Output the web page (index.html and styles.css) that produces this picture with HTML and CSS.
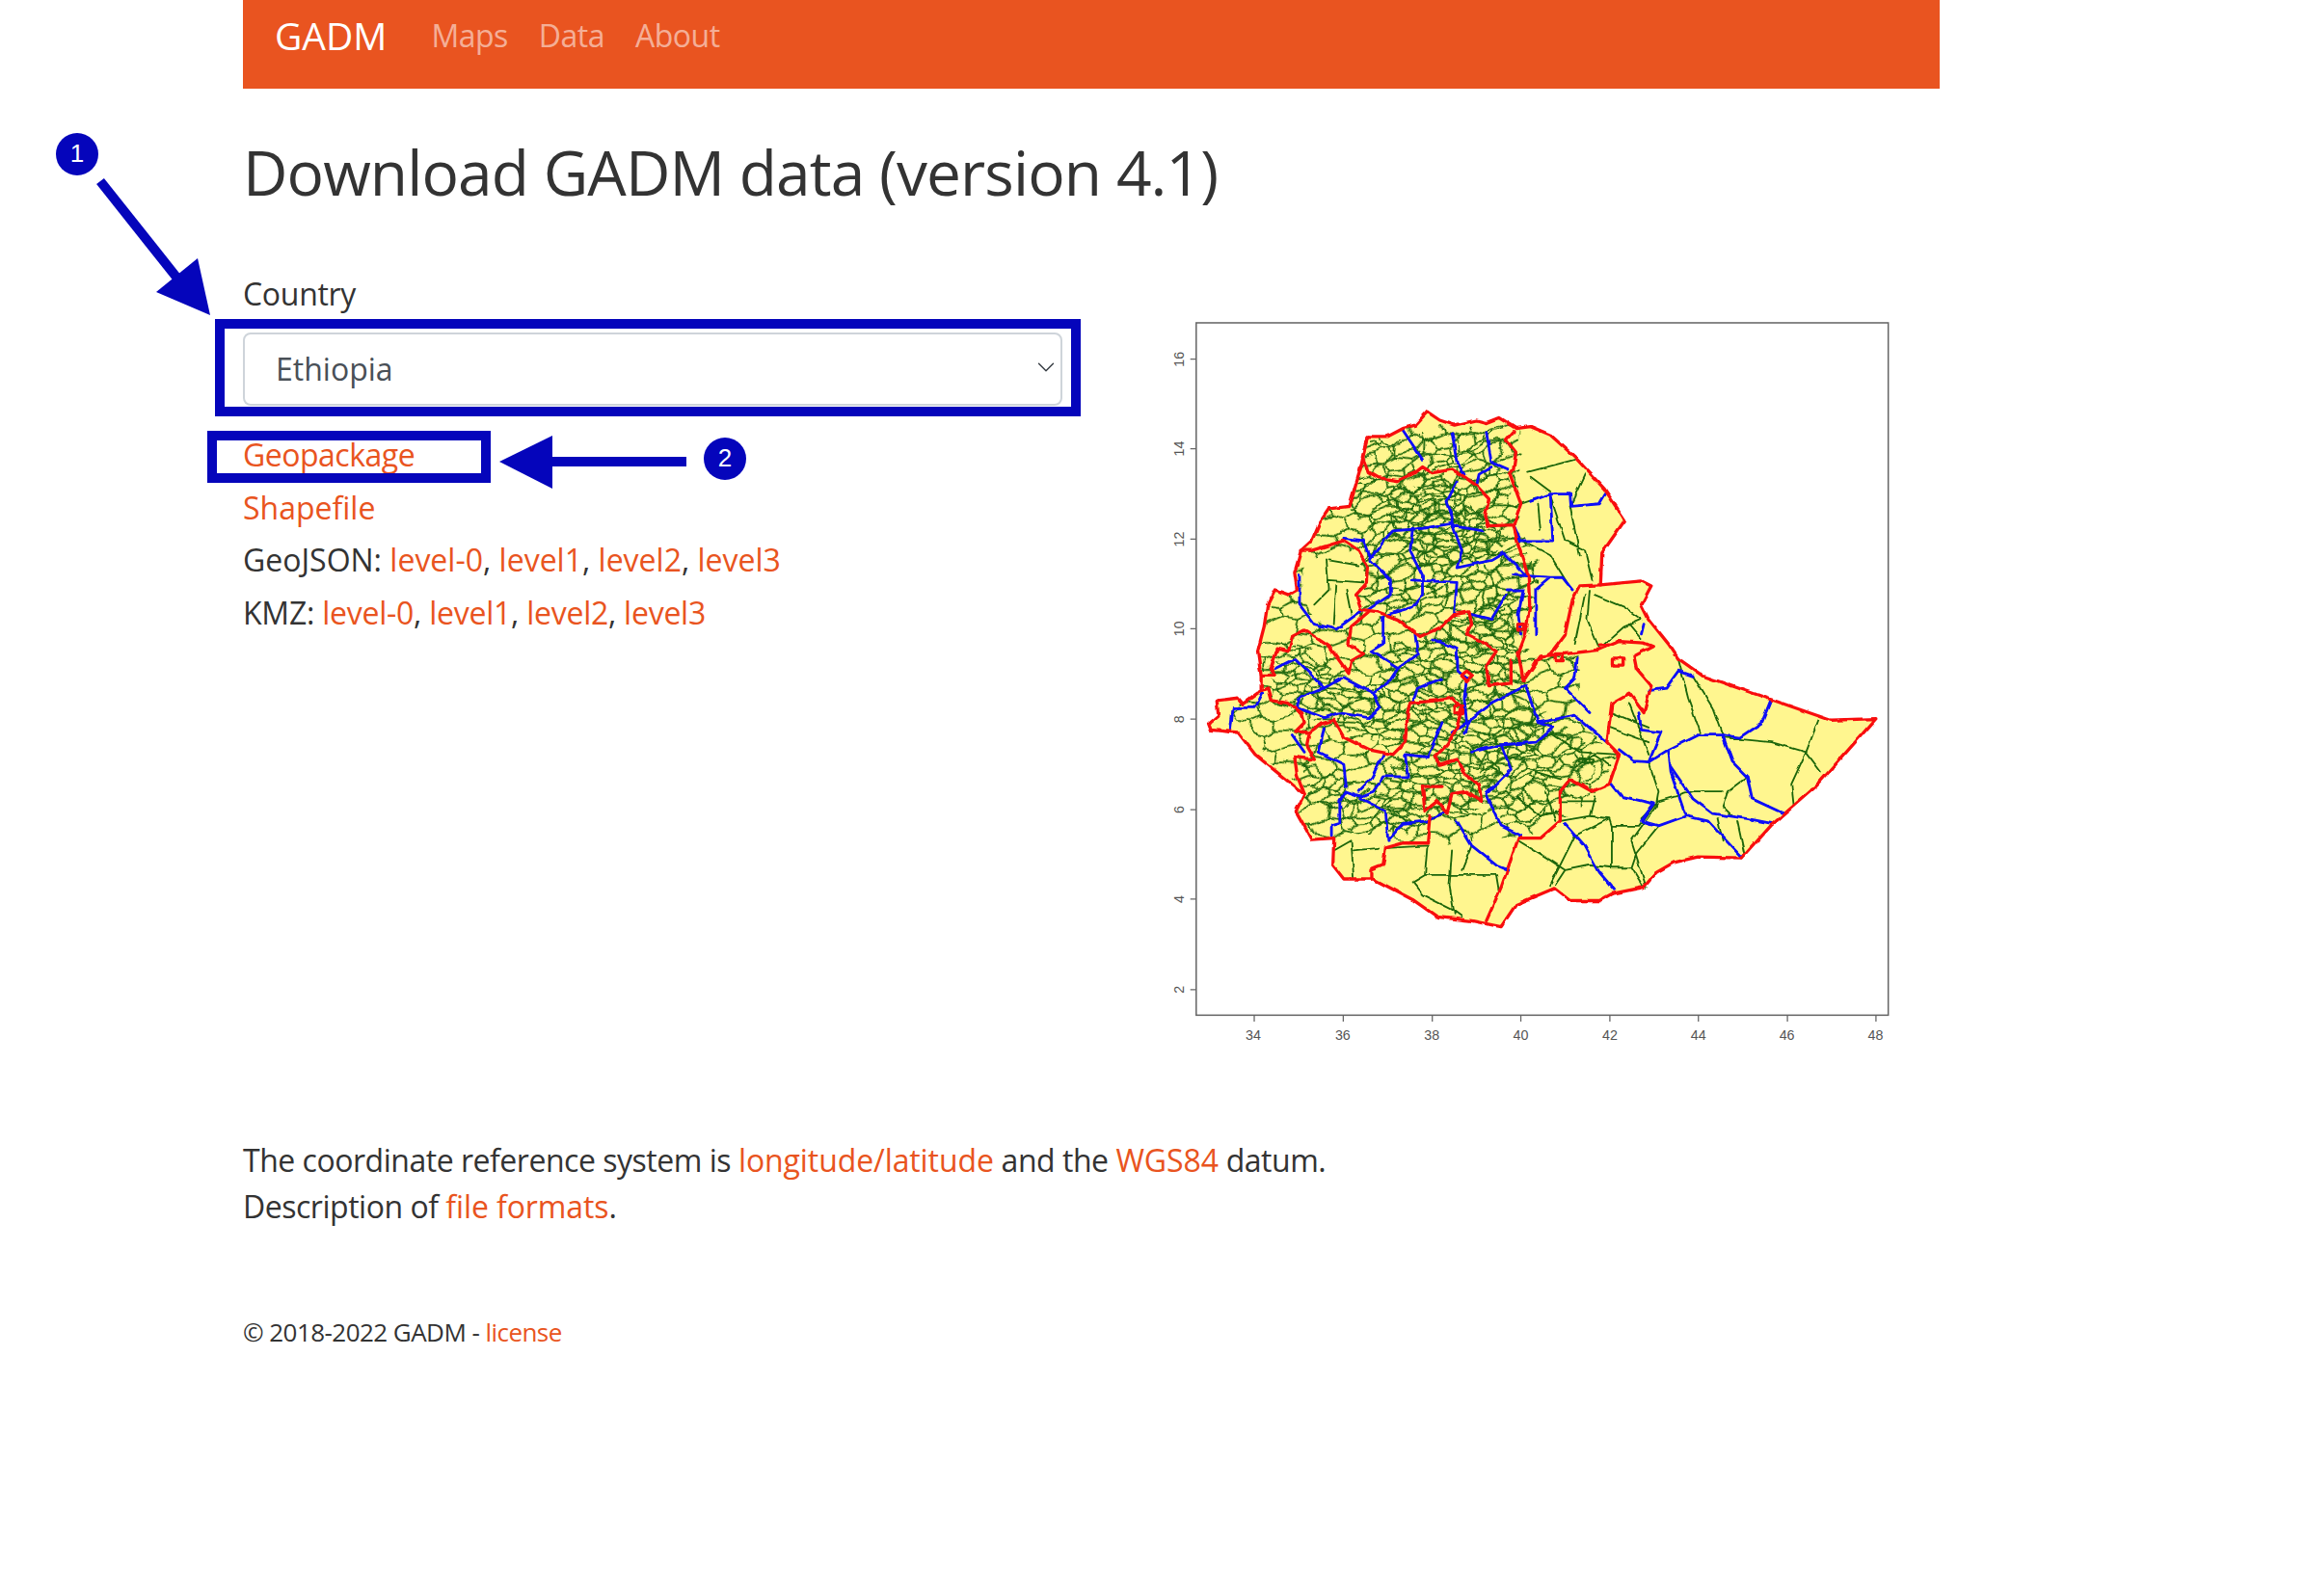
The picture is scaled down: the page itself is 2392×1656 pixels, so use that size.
FILE: index.html
```html
<!DOCTYPE html>
<html lang="en">
<head>
  <meta charset="UTF-8">
  <meta name="viewport" content="width=device-width, initial-scale=1.0">
  <title>Download GADM data</title>
  <link rel="stylesheet" href="styles.css">
</head>
<body>
  <div class="page">
    <nav class="navbar">
      <a class="brand" href="#">GADM</a>
      <a class="nav-link" href="#">Maps</a>
      <a class="nav-link" href="#">Data</a>
      <a class="nav-link" href="#">About</a>
    </nav>

    <h1>Download GADM data (version 4.1)</h1>

    <div class="content">
      <div class="left-col">
        <label class="field-label" for="country">Country</label>
        <div class="select-wrap">
          <select id="country" class="country-select">
            <option>Ethiopia</option>
          </select>
          <svg class="chevron" viewBox="0 0 16 16"><path d="M2 5l6 6 6-6" fill="none" stroke="#343a40" stroke-width="1.1" stroke-linecap="round" stroke-linejoin="round"/></svg>
        </div>
        <p class="row tight"><a href="#">Geopackage</a></p>
        <p class="row"><a href="#">Shapefile</a></p>
        <p class="row">GeoJSON: <a href="#">level-0</a>, <a href="#">level1</a>, <a href="#">level2</a>, <a href="#">level3</a></p>
        <p class="row kmz">KMZ: <a href="#">level-0</a>, <a href="#">level1</a>, <a href="#">level2</a>, <a href="#">level3</a></p>
      </div>

      <svg class="map" viewBox="0 0 1568 1568">
        <defs>
          <clipPath id="country-clip">
            <path d="M105,862 125,845 122,815 165,810 175,822 205,800 212,795 212,765 205,715 218,665 225,620 240,590 268,600 285,590 280,555 293,510 315,490 330,455 350,425 392,420 415,340 428,278 470,278 500,262 525,255 550,228 575,245 605,255 650,245 670,250 695,240 730,262 760,258 800,275 850,320 910,385 952,448 905,515 902,580 985,572 1005,582 985,620 1000,650 1040,700 1060,730 1110,765 1240,810 1370,855 1462,852 1340,990 1250,1068 1190,1135 1100,1133 1050,1145 1015,1165 990,1195 925,1208 900,1222 840,1222 808,1197 730,1230 700,1275 640,1263 570,1255 520,1220 440,1178 380,1178 358,1150 360,1095 315,1098 283,1040 300,1005 280,990 200,925 165,880 110,875Z"/>
          </clipPath>
          <g id="tile" fill="none" stroke="#1a6508" stroke-linejoin="round">
            <path d="M0,8 14,12 30,6 46,11 62,5 80,8M0,28 18,24 34,30 50,25 66,31 80,28M0,48 12,52 28,46 44,51 60,45 80,48M0,68 16,64 32,70 48,65 64,71 80,68"/>
            <path d="M14,12 18,24M46,11 50,25M34,30 28,46M66,31 60,45M12,52 16,64M44,51 48,65M32,70 30,80M30,0 30,6M64,71 62,80M62,0 62,5"/>
          </g>
          <pattern id="mesh-dense" width="80" height="80" patternUnits="userSpaceOnUse" patternTransform="rotate(14) scale(.95)">
            <use href="#tile" stroke-width="3.4"/>
          </pattern>
          <pattern id="mesh-fine" width="80" height="80" patternUnits="userSpaceOnUse" patternTransform="rotate(-28) scale(1.25)">
            <use href="#tile" stroke-width="2.7"/>
          </pattern>
          <pattern id="mesh-medium" width="80" height="80" patternUnits="userSpaceOnUse" patternTransform="rotate(-9) scale(1.6)">
            <use href="#tile" stroke-width="2.2"/>
          </pattern>
          <filter id="warp" filterUnits="userSpaceOnUse" x="0" y="0" width="1568" height="1568">
            <feTurbulence type="fractalNoise" baseFrequency=".018" numOctaves="1" seed="4"/>
            <feGaussianBlur stdDeviation="3"/>
            <feDisplacementMap in="SourceGraphic" scale="40" xChannelSelector="R" yChannelSelector="G"/>
          </filter>
          <filter id="wobble" filterUnits="userSpaceOnUse" x="0" y="0" width="1568" height="1568">
            <feTurbulence type="fractalNoise" baseFrequency=".05" numOctaves="1" seed="9" result="n"/>
            <feGaussianBlur in="n" stdDeviation="2" result="soft"/>
            <feDisplacementMap in="SourceGraphic" in2="soft" scale="9" xChannelSelector="R" yChannelSelector="G"/>
            <feGaussianBlur stdDeviation="1"/>
          </filter>
        </defs>

        <!-- plot frame and axes -->
        <rect class="frame" x="80" y="47" width="1407" height="1408"/>
        <path class="ticks" d="M68,121H80M68,303H80M68,487H80M68,669H80M68,853H80M68,1037H80M68,1219H80M68,1403H80M198,1455V1468M379,1455V1468M560,1455V1468M740,1455V1468M921,1455V1468M1101,1455V1468M1282,1455V1468M1462,1455V1468"/>
        <g class="axis-labels">
          <text x="196" y="1505">34</text><text x="378" y="1505">36</text><text x="559" y="1505">38</text><text x="740" y="1505">40</text>
          <text x="921" y="1505">42</text><text x="1101" y="1505">44</text><text x="1281" y="1505">46</text><text x="1461" y="1505">48</text>
          <text transform="translate(55,121) rotate(-90)">16</text><text transform="translate(55,303) rotate(-90)">14</text>
          <text transform="translate(55,487) rotate(-90)">12</text><text transform="translate(55,669) rotate(-90)">10</text>
          <text transform="translate(55,853) rotate(-90)">8</text><text transform="translate(55,1037) rotate(-90)">6</text>
          <text transform="translate(55,1219) rotate(-90)">4</text><text transform="translate(55,1403) rotate(-90)">2</text>
        </g>

        <g filter="url(#wobble)">
          <g clip-path="url(#country-clip)">
            <rect class="land" x="80" y="200" width="1400" height="1100"/>
            <g filter="url(#warp)">
              <path fill="url(#mesh-medium)" d="M100,780 230,580 300,480 420,270 740,240 735,460 760,500 780,560 750,700 780,720 850,720 850,850 940,930 890,1010 820,1060 730,1095 620,1100 560,1110 480,1100 400,1090 340,1100 280,1040 280,990 200,900Z"/>
              <path fill="url(#mesh-fine)" d="M430,290 700,260 730,460 760,560 740,700 600,640 470,640 400,560 430,480 390,420ZM290,930 440,1000 560,1060 500,1090 400,1090 300,1000ZM640,900 780,820 900,930 860,990 760,1060 680,1060Z"/>
              <path fill="url(#mesh-dense)" d="M225,740 290,690 370,760 440,800 470,700 530,690 610,650 700,590 735,720 760,800 800,880 720,950 660,1030 600,1060 560,1060 470,1060 450,980 530,900 440,900 340,860 250,820Z"/>
              <path fill="url(#mesh-dense)" d="M480,380 600,360 660,430 720,480 690,520 610,540 540,540 470,480Z"/>
            </g>
            <path class="land" d="M300,530 400,510 425,560 405,600 420,630 360,665 320,650 295,600Z"/>
            <path class="land" d="M370,1105 450,1115 445,1170 380,1175ZM620,1120 720,1120 700,1230 640,1255 600,1230Z"/>
          </g>
          <path class="line-green" d="M755,350 850,325M760,360 800,390M870,355 840,420M800,400 830,490 870,510 885,570M840,420 860,520M725,420 770,405M745,490 800,520 840,585M775,415 780,470M880,590 875,650 900,710M870,600 850,700M890,600 950,625 985,650 950,665 910,700M960,660 985,690M1060,730 1080,810 1105,880M1090,765 1130,830 1150,885M1150,890 1250,900 1320,920 1350,960M1345,855 1320,920 1290,985 1295,1030M1200,970 1160,1000 1150,1030 1170,1050M1090,1000 1150,1000M1090,1000 1020,1020 985,1055M1000,940 1020,1000 1015,1030 965,1100 995,1195M1140,1055 1150,1100M1180,1060 1195,1130M1020,1070 975,1125 965,1155 925,1155 925,1070 920,1055 880,1050 820,1060M925,1070 980,1070 1010,1030M880,1050 890,1010M820,1020 890,1020M920,1055 850,1090 800,1190M965,1155 990,1195M735,1100 800,1140 830,1160 810,1190M880,1150 830,1160M925,1155 880,1150M470,1115 550,1110 545,1170 520,1185 540,1210 600,1240 620,1255M600,1120 595,1190 605,1250M545,1170 690,1170 695,1200M640,1110 620,1160M360,1120 395,1100 400,1175M400,1120 450,1115M345,530 350,590 320,620M350,530 410,540M350,570 420,575M365,580 360,660M385,590 395,640M925,840 1000,870M920,870 1000,900M960,820 1000,925M850,950 890,925 920,945M858,932 890,935 885,942 858,940ZM800,880 860,920 940,925M770,960 820,975M790,1000 810,1060M730,1010 780,1050 820,1040"/>
          <path class="line-blue" d="M500,265 540,325M600,270 610,330 625,355M670,270 680,330 715,345M650,378 655,355 680,340M610,370 590,410 600,440 600,455 540,465 480,470 470,480 435,525 420,490 380,485M600,455 620,510 610,545 680,530 705,515 750,560M600,460 665,470M435,530 475,570 475,600 430,630M520,465 515,510 540,560 540,600 520,625 470,640M520,570 610,575 605,640M290,560 290,620 320,660 365,670 420,630M725,560 800,565 825,565 845,590M800,565 770,590 770,680M710,590 745,590 735,640 740,680M640,640 680,650 710,600M725,458 740,490 805,490 800,395 840,395 842,420 900,415 912,395M760,410 800,395M460,645 460,700 435,715 490,750 470,780 440,800 380,770M525,680 530,720 490,750M560,690 610,710 612,755 630,770 625,810M580,770 530,790 520,820M240,750 280,730 340,790 375,770M340,790 290,810 285,830 340,850 370,840 430,850 455,830 440,800M625,810 630,860 600,880M750,785 680,820 640,850 625,880M750,785 775,860 805,870 770,900 700,905 640,920M700,905 720,955 670,1005 700,1070 740,1090M775,860 850,845 885,875 915,900M855,730 850,770 830,790 880,840M505,925 550,930 580,860M505,925 510,970 460,970 440,1000 415,1010 385,1000 372,1020 372,1065 355,1070 355,1090M460,925 435,975 410,1000M340,870 330,920 380,945 385,990M275,885 300,920M155,830 150,875M155,830 200,830 215,800M415,1015 465,1040 470,1100 500,1065 550,1060 590,1040M610,1060 640,1110 690,1150 715,1160M830,1065 870,1110 900,1165 930,1200M925,985 945,1010 1010,1025 985,1060 1020,1070 1075,1050 1120,1060 1190,1135M1075,1050 1045,960 1040,915 1100,885 1150,885 1185,890 1230,860 1248,815M1150,885 1170,940 1200,970 1210,1015 1275,1045M1045,950 1090,1015 1130,1045 1200,1055 1250,1065M1040,915 1000,940 970,938 940,915M1000,940 1025,880 985,875 980,840M1000,795 1035,790 1060,755 1090,765M990,660 985,680"/>
          <path class="line-red" d="M105,862 125,845 122,815 165,810 175,822 205,800 212,795 212,765 205,715 218,665 225,620 240,590 268,600 285,590 280,555 293,510 315,490 330,455 350,425 392,420 415,340 428,278 470,278 500,262 525,255 550,228 575,245 605,255 650,245 670,250 695,240 730,262 760,258 800,275 850,320 910,385 952,448 905,515 902,580 985,572 1005,582 985,620 1000,650 1040,700 1060,730 1110,765 1240,810 1370,855 1462,852 1340,990 1250,1068 1190,1135 1100,1133 1050,1145 1015,1165 990,1195 925,1208 900,1222 840,1222 808,1197 730,1230 700,1275 640,1263 570,1255 520,1220 440,1178 380,1178 358,1150 360,1095 315,1098 283,1040 300,1005 280,990 200,925 165,880 110,875Z"/>
          <path class="line-red" d="M428,278 418,320 430,350 450,362 490,368 525,352 540,340 560,352 600,345 625,360 650,378 675,405 668,440 675,460 725,458 735,500 755,560 758,620 750,680 735,720 745,775M710,285 725,268M710,285 730,310 725,345 718,355 740,415 725,458M292,510 315,510 380,490 410,510 430,545 428,575 405,600 415,630 450,635 490,650 535,685 580,665 605,640 635,635 640,660 630,680 660,695 690,715 670,745 675,785 720,780 720,735M430,635 395,665 390,700 420,720 395,735 390,760 350,705 300,672 275,685 268,715 245,710 232,750 240,765 212,765M212,795 225,790 232,815 265,820 295,840 300,860 282,878 310,880 335,862 360,855 380,890 430,915 480,925 505,900 510,840 515,820 570,815 600,810 620,830 610,870 590,905 565,930 575,945 610,935 625,965 655,985 660,1020 630,1000 600,1005 590,1045 570,1020 545,1040 540,990 580,990M310,880 305,905 322,935 280,930 285,965 300,1005M555,1050 550,1105 500,1105 465,1115 460,1150 435,1160 435,1178M745,775 770,735 800,720 830,680 845,610 860,582 902,580M745,775 780,725 850,718 900,712 940,695 990,698 1008,705 970,725 975,750 1005,785 990,840 960,800 925,820 915,900 940,925 920,985 885,1000 840,975 820,1000 820,1060 780,1095 735,1095 700,1195 670,1263"/>
          <path class="line-red" d="M618,765 630,755 642,765 630,777ZM926,729H948V743H926ZM810,720H826V734H810ZM900,702H920M732,660H748V672H732ZM606,826H622V842H606Z"/>
        </g>
      </svg>
    </div>

    <div class="notes">
      <p>The coordinate reference system is <a href="#">longitude/latitude</a> and the <a href="#">WGS84</a> datum.</p>
      <p>Description of <a href="#">file formats</a>.</p>
    </div>

    <footer class="footer">© 2018-2022 GADM - <a href="#">license</a></footer>
  </div>

  <!-- blue annotations drawn on top of the page -->
  <svg class="annotations" viewBox="0 0 2392 1656">
    <rect x="228" y="336" width="888" height="91"/>
    <rect x="220" y="452" width="284" height="44"/>
    <path class="arrow-line" d="M104,188 185,290"/>
    <path class="arrow-head" d="M218,327 205,268 162,303Z"/>
    <path class="arrow-line" d="M570,479H712"/>
    <path class="arrow-head" d="M518,479 573,452V507Z"/>
    <circle cx="80" cy="160" r="22"/>
    <text x="80" y="168">1</text>
    <circle cx="752" cy="476" r="22"/>
    <text x="752" y="484">2</text>
  </svg>
</body>
</html>
```

FILE: styles.css
```css
body {
  margin: 0;
  background-color: #fff;
  color: #333;
  font-family: "Open Sans", "Noto Sans", sans-serif;
  font-size: 32px;
  line-height: 48px;
}
a {
  color: #e95420;
  text-decoration: none;
}
p {
  margin: 0;
}
.page {
  width: 1760px;
  margin-left: 252px;
}
.navbar {
  display: flex;
  align-items: center;
  gap: 32px;
  height: 92px;
  padding: 0 0 18px 33px;
  box-sizing: border-box;
  background-color: #e95420;
}
.brand {
  color: #fff;
  font-size: 39px;
  margin-right: 14px;
}
.nav-link {
  color: rgba(255, 255, 255, 0.55);
  letter-spacing: -0.5px;
}
h1 {
  margin: 51px 0 0;
  font-size: 64px;
  font-weight: 400;
  line-height: 72px;
  letter-spacing: -0.9px;
  color: #333;
}
.content {
  display: grid;
  grid-template-columns: 850px 800px;
  column-gap: 98px;
  margin-top: 66px;
}
.field-label {
  display: block;
  line-height: 48px;
  margin-bottom: 16px;
  letter-spacing: -0.3px;
}
.select-wrap {
  position: relative;
}
.country-select {
  display: block;
  width: 100%;
  height: 76px;
  padding: 0 60px 0 32px;
  border: 2px solid #ced4da;
  border-radius: 8px;
  background-color: #fff;
  color: #495057;
  font: inherit;
  appearance: none;
}
.chevron {
  position: absolute;
  right: 7px;
  top: 26px;
  width: 20px;
  height: 20px;
}
.row {
  line-height: 48px;
  margin-top: 6.5px;
}
.select-wrap + .row {
  margin-top: 27px;
}
.tight {
  letter-spacing: -0.5px;
}
.kmz {
  letter-spacing: -0.25px;
}
.map {
  display: block;
  width: 800px;
  height: 800px;
  margin-top: 30px;
}
.frame {
  fill: #fff;
  stroke: #666;
  stroke-width: 3;
}
.ticks {
  fill: none;
  stroke: #666;
  stroke-width: 2.5;
}
.axis-labels text {
  font-family: "Liberation Sans", Arial, sans-serif;
  font-size: 28px;
  fill: #555;
  text-anchor: middle;
}
.land {
  fill: #fff68f;
}
.line-green,
.line-blue,
.line-red {
  fill: none;
  stroke-linejoin: round;
  stroke-linecap: round;
}
.line-green {
  stroke: #1a6508;
  stroke-width: 3.6;
}
.line-blue {
  stroke: #0808f8;
  stroke-width: 5.5;
}
.line-red {
  stroke: #f81010;
  stroke-width: 6.5;
}
.notes {
  margin-top: 68.5px;
  letter-spacing: -0.48px;
}
.notes a {
  letter-spacing: -0.1px;
}
.footer {
  margin-top: 86px;
  font-size: 26px;
  line-height: 40px;
  letter-spacing: -0.55px;
}
.annotations {
  position: absolute;
  left: 0;
  top: 0;
  width: 2392px;
  height: 1656px;
  pointer-events: none;
}
.annotations rect {
  fill: none;
  stroke: #0505bb;
  stroke-width: 10;
}
.arrow-line {
  fill: none;
  stroke: #0505bb;
  stroke-width: 10;
}
.arrow-head,
.annotations circle {
  fill: #0505bb;
}
.annotations text {
  font-family: "Liberation Sans", Arial, sans-serif;
  font-size: 26px;
  fill: #fff;
  text-anchor: middle;
}
```
